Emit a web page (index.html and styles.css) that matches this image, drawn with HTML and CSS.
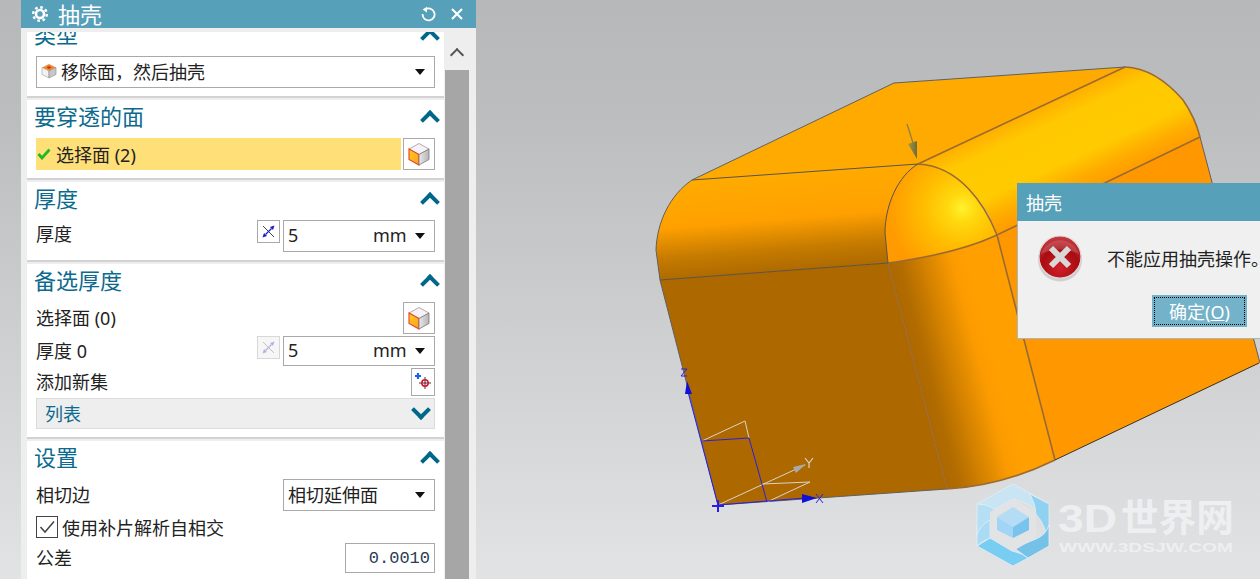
FILE: index.html
```html
<!DOCTYPE html>
<html lang="zh-CN">
<head>
<meta charset="utf-8">
<title>抽壳</title>
<link rel="stylesheet" href="styles.css">
</head>
<body>
<svg class="canvas" viewBox="0 0 1260 579" width="1260" height="579" xmlns="http://www.w3.org/2000/svg">
  <defs>
    <linearGradient id="gLeft" gradientUnits="userSpaceOnUse" x1="800" y1="172" x2="808" y2="272">
      <stop offset="0" stop-color="#ffab00"/><stop offset=".45" stop-color="#ffa000"/><stop offset=".75" stop-color="#c67b00"/><stop offset="1" stop-color="#ab6800"/>
    </linearGradient>
    <linearGradient id="gRight" gradientUnits="userSpaceOnUse" x1="1022" y1="115" x2="1063" y2="203">
      <stop offset="0" stop-color="#ffae00"/><stop offset=".2" stop-color="#ffc800"/><stop offset=".62" stop-color="#ffcb00"/><stop offset=".84" stop-color="#ffab00"/><stop offset="1" stop-color="#ff9b00"/>
    </linearGradient>
    <linearGradient id="gMid" gradientUnits="userSpaceOnUse" x1="925" y1="400" x2="1000" y2="380">
      <stop offset="0" stop-color="#ad6800"/><stop offset=".15" stop-color="#b26c00"/><stop offset=".8" stop-color="#fb9b00"/><stop offset="1" stop-color="#ff9f00"/>
    </linearGradient>
    <radialGradient id="gCap" gradientUnits="userSpaceOnUse" cx="962" cy="208" r="74">
      <stop offset="0" stop-color="#fff22e"/><stop offset=".2" stop-color="#ffd80e"/><stop offset=".5" stop-color="#ffbe00"/><stop offset="1" stop-color="#ff9a00"/>
    </radialGradient>
    <linearGradient id="gCone" x1="0" y1="0" x2="1" y2="0">
      <stop offset="0" stop-color="#a09a50"/><stop offset="1" stop-color="#6e6a38"/>
    </linearGradient>
    <linearGradient id="gCubeFace" x1="0" y1="0" x2="1" y2="1">
      <stop offset="0" stop-color="#ffd020"/><stop offset="1" stop-color="#ff9a20"/>
    </linearGradient>
    <linearGradient id="gCubeSide" x1="0" y1="0" x2="1" y2="0">
      <stop offset="0" stop-color="#e8e8e8"/><stop offset="1" stop-color="#b4b4b4"/>
    </linearGradient>
  </defs>

  <!-- solid body -->
  <polygon fill="#ffaa00" points="692,180 894,83 1125,67 918,164"/>
  <path fill="url(#gLeft)" d="M692,180 L918,164 C898,176 885,205 885,233 L888,263 L660,280 L656,250 C657,222 670,195 692,180 Z"/>
  <polygon fill="#ad6800" points="660,280 888,263 947,489 718,505"/>
  <path fill="url(#gMid)" d="M888,263 C925,258 965,250 997,235 L1055,460 C1020,477 985,487 947,489 Z"/>
  <polygon fill="#ff9800" points="997,235 1200,137 1260,363 1055,460"/>
  <path fill="url(#gRight)" d="M918,164 L1125,67 C1150,68 1170,85 1183,100 C1192,113 1197,125 1200,137 L997,235 C990,210 965,170 918,164 Z"/>
  <path fill="url(#gCap)" d="M918,164 C960,166 985,205 997,235 C965,250 925,258 888,263 L885,233 C885,205 898,176 918,164 Z"/>

  <!-- seams -->
  <g fill="none" stroke="#9a6a34" stroke-width="1.6">
    <path d="M918,164 L1125,67"/>
    <path d="M997,235 L1200,137"/>
    <path d="M888,263 C925,258 965,250 997,235"/>
    <path d="M918,164 C960,166 985,205 997,235"/>
    <path d="M888,263 L947,489" stroke-opacity=".7"/>
    <path d="M997,235 L1055,460"/>
    <path d="M1125,67 C1150,68 1170,85 1183,100 C1192,113 1197,125 1200,137"/>
    <path d="M947,489 C985,487 1020,477 1055,460"/>
  </g>
  <g fill="none" stroke="#5c5246" stroke-width="1">
    <path d="M692,180 L918,164"/>
    <path d="M660,280 L888,263"/>
    <path d="M918,164 C898,176 885,205 885,233 L888,263"/>
  </g>
  <g fill="none" stroke="#606060" stroke-width="1">
    <path d="M692,180 L894,83 L1125,67"/>
    <path d="M692,180 C670,195 657,222 656,250 L660,280 L718,505"/>
    <path d="M1200,137 L1260,363"/>
    <path d="M718,505 L947,489"/>
    <path d="M1055,460 L1259,363" stroke="#333"/>
  </g>

  <!-- direction arrow -->
  <line x1="907" y1="124" x2="914" y2="146" stroke="#8a8248" stroke-width="1.3"/>
  <polygon fill="url(#gCone)" points="908,144 917,141 917,159"/>

  <!-- triad -->
  <g fill="none" stroke="#d8d4cc" stroke-width="1">
    <path d="M702,441 L745,421 L749,438"/>
    <path d="M718,505 L805,465"/>
    <path d="M762,484 L810,482 L767,502"/>
  </g>
  <g fill="none" stroke="#2a1fe0" stroke-width="1">
    <path d="M718,505 L688,392"/>
    <path d="M702,441 L749,438 L767,502"/>
    <path d="M718,505 L805,498"/>
    <path d="M712,506 L724,506 M718,500 L718,512" stroke-width="2"/>
    <path d="M681,369 L687,369 L681,376 L687,376"/>
    <path d="M816,494 L823,503 M823,494 L816,503"/>
  </g>
  <polygon fill="#1010d8" points="687,381 692,394 685,394"/>
  <polygon fill="#1010d8" points="817,498 802,494 802,503"/>
  <polygon fill="#aaaaaa" points="806,464 793,467 796,473"/>
  <path d="M805,458 L809,463 L813,458 M809,463 L809,468" fill="none" stroke="#d4d2cc" stroke-width="1.2"/>

  <!-- watermark -->
  <g stroke="#e4eef4" stroke-width=".8">
    <path fill="#c9e4f3" d="M1013,484 L1049,504 L1037,513 Q1035,505 1013,499 L993,510 Q985,504 977,504 Z"/>
    <path fill="#8fd1f1" d="M1030,494 L1049,504 L1049,546 Q1046,525 1036,514 Q1036,505 1030,494 Z"/>
    <path fill="#76c1e8" d="M1049,525 L1049,546 L1028,558 L1014,548 L1036,539 Q1046,535 1049,525 Z"/>
    <path fill="#79cdf3" d="M1013,566 L977,546 L990,538 L1012,551 Q1022,553 1028,558 Z"/>
    <path fill="#a9dbf4" d="M977,546 L977,525 Q984,512 990,512 L990,538 Q982,541 977,546 Z"/>
    <path fill="#b6dff4" d="M977,504 Q992,504 1000,515 L990,520 Q980,525 977,535 Z"/>
  </g>
  <polygon fill="#e1e3e5" points="1013,499 1036,512 1036,538 1013,551 990,538 990,512"/>
  <polygon fill="#b4dcf4" points="1013,507 1029,517 1013,527 997,517"/>
  <polygon fill="#a2d5f5" points="997,517 1013,527 1013,538 997,530"/>
  <polygon fill="#78c4ec" points="1029,517 1029,530 1013,538 1013,527"/>
  <text class="wm-main" x="1058" y="532" textLength="59" lengthAdjust="spacingAndGlyphs">3D</text>
  <text class="wm-main" x="1121" y="531" textLength="113" lengthAdjust="spacingAndGlyphs">世界网</text>
  <text class="wm-url" x="1059" y="552" textLength="174" lengthAdjust="spacingAndGlyphs">WWW.3DSJW.COM</text>
</svg>

<aside class="panel">
  <header class="panel-title">
    <svg class="title-icon" viewBox="0 0 16 16" width="16" height="16">
      <circle cx="8" cy="8" r="6.8" fill="none" stroke="#fff" stroke-width="2.4" stroke-dasharray="2.7 2.64"/>
      <circle cx="8" cy="8" r="4" fill="none" stroke="#fff" stroke-width="2.6"/>
    </svg>
    <span class="panel-name">抽壳</span>
    <svg class="title-btn" viewBox="0 0 16 16" width="16" height="16">
      <path d="M5 3.6 A6 6 0 1 1 2.6 8" fill="none" stroke="#fff" stroke-width="1.8"/>
      <polygon points="7,0.8 7,6.4 2.6,3.6" fill="#fff"/>
    </svg>
    <svg class="title-btn close" viewBox="0 0 14 14" width="14" height="14">
      <path d="M2 2 L12 12 M12 2 L2 12" stroke="#fff" stroke-width="2.1"/>
    </svg>
  </header>
  <div class="panel-body">
    <div class="sections">
      <section class="section first">
        <div class="head"><span>类型</span><i class="chev"></i></div>
        <div class="field wide">
          <svg class="type-icon" viewBox="0 0 16 16" width="16" height="16">
            <polygon points="8,1 15,4.5 8,8 1,4.5" fill="#f08a3a"/>
            <polygon points="5.5,4.5 8,3 10.5,4.5 8,6" fill="#c23a10"/>
            <polygon points="1,4.5 8,8 8,15 1,11.5" fill="#f2f2f2" stroke="#999" stroke-width=".6"/>
            <polygon points="15,4.5 8,8 8,15 15,11.5" fill="#c8c8c8" stroke="#888" stroke-width=".6"/>
          </svg>
          <span class="grow">移除面，然后抽壳</span><i class="caret"></i>
        </div>
      </section>

      <section class="section">
        <div class="head"><span>要穿透的面</span><i class="chev"></i></div>
        <div class="row">
          <div class="selected">
            <svg class="tick" viewBox="0 0 14 12" width="14" height="12"><path d="M1.5 6 L5 10 L12.5 1.5" fill="none" stroke="#22b82a" stroke-width="2.8"/></svg>
            <span>选择面 (2)</span>
          </div>
          <button class="icon-btn"><svg viewBox="0 0 24 24" width="24" height="24"><use href="#cube"/></svg></button>
        </div>
      </section>

      <section class="section">
        <div class="head"><span>厚度</span><i class="chev"></i></div>
        <div class="row">
          <span class="label up">厚度</span>
          <button class="mini-btn"><svg viewBox="0 0 21 21" width="21" height="21"><use href="#measure"/></svg></button>
          <div class="field num"><span class="grow">5</span><span class="unit">mm</span><i class="caret"></i></div>
        </div>
      </section>

      <section class="section">
        <div class="head"><span>备选厚度</span><i class="chev"></i></div>
        <div class="stack">
          <div class="row">
            <span class="label">选择面 (0)</span>
            <button class="icon-btn"><svg viewBox="0 0 24 24" width="24" height="24">
              <g id="cube">
                <polygon points="12,1.5 22,7 12,12.5 2,7" fill="#f6f2f8" stroke="#9a9a9a" stroke-width=".8"/>
                <polygon points="2,7 12,12.5 12,23 2,17.5" fill="url(#gCubeFace)" stroke="#e8402a" stroke-width="1.1"/>
                <polygon points="22,7 12,12.5 12,23 22,17.5" fill="url(#gCubeSide)" stroke="#7a7a7a" stroke-width=".8"/>
              </g>
            </svg></button>
          </div>
          <div class="row short">
            <span class="label">厚度 0</span>
            <button class="mini-btn off"><svg viewBox="0 0 21 21" width="21" height="21">
              <g id="measure">
                <path d="M5 5 L16 16" stroke="#444" stroke-width="1" fill="none"/>
                <path d="M7.5 13.5 L13.5 7.5" stroke="#1c1cc0" stroke-width="1.2" fill="none"/>
                <polygon points="16.5,4.5 12,6 15,9" fill="#1c1cc0"/>
                <polygon points="4.5,16.5 9,15 6,12" fill="#1c1cc0"/>
              </g>
            </svg></button>
            <div class="field num"><span class="grow">5</span><span class="unit">mm</span><i class="caret"></i></div>
          </div>
          <div class="row tiny">
            <span class="label">添加新集</span>
            <button class="add-btn"><svg viewBox="0 0 22 26" width="22" height="26">
              <path d="M3 7 H9 M6 4 V10" stroke="#1560f0" stroke-width="2.2" fill="none"/>
              <path d="M7 14 H19 M13 8 V20" stroke="#222" stroke-width=".9" fill="none"/>
              <circle cx="13" cy="14" r="3.2" fill="none" stroke="#e0102a" stroke-width="1.5"/>
            </svg></button>
          </div>
          <div class="list-bar"><span>列表</span><i class="chev down"></i></div>
        </div>
      </section>

      <section class="section">
        <div class="head"><span>设置</span><i class="chev"></i></div>
        <div class="stack loose">
          <div class="row">
            <span class="label">相切边</span>
            <div class="field num"><span class="grow">相切延伸面</span><i class="caret"></i></div>
          </div>
          <label class="check-row">
            <span class="check"><svg viewBox="0 0 20 20" width="20" height="20"><path d="M3.5 10 L8 15 L17 4.5" fill="none" stroke="#444" stroke-width="1.5"/></svg></span>
            <span>使用补片解析自相交</span>
          </label>
          <div class="row short">
            <span class="label">公差</span>
            <div class="field tol">0.0010</div>
          </div>
        </div>
      </section>
    </div>
    <div class="scroll">
      <div class="scroll-up"><i class="chev small"></i></div>
      <div class="scroll-thumb"></div>
    </div>
  </div>
</aside>

<div class="dialog">
  <div class="dialog-title">抽壳</div>
  <div class="dialog-body">
    <div class="dialog-msg">
      <svg class="err" viewBox="0 0 48 50" width="48" height="50">
        <defs>
          <radialGradient id="gErr" cx=".5" cy=".75" r=".75">
            <stop offset="0" stop-color="#d02028"/><stop offset=".6" stop-color="#a80c12"/><stop offset="1" stop-color="#c84048"/>
          </radialGradient>
        </defs>
        <ellipse cx="24" cy="27" rx="22" ry="21.5" fill="#bbbbbb" opacity=".6"/>
        <circle cx="24" cy="24" r="21" fill="url(#gErr)" stroke="#e0d8d8" stroke-width="1.2"/>
        <path d="M5 21 A20 20 0 0 1 43 21 Q24 12 5 21 Z" fill="#fff" opacity=".16"/>
        <path d="M15 15 L33 33 M33 15 L15 33" stroke="#d8d8d8" stroke-width="6"/>
      </svg>
      <span>不能应用抽壳操作。</span>
    </div>
    <div class="dialog-actions">
      <button class="ok"><span>确定(<u>O</u>)</span></button>
    </div>
  </div>
</div>
</body>
</html>
```

FILE: styles.css
```css
* { box-sizing: border-box; }

html, body { height: 100%; }

body {
  margin: 0;
  height: 579px;
  overflow: hidden;
  position: relative;
  background: linear-gradient(#b7b8ba, #bcbdbf 20%, #e2e3e5);
  font-family: "Noto Sans", "Noto Sans CJK SC", sans-serif;
  font-size: 18px;
  color: #222;
}

.canvas { position: absolute; left: 0; top: 0; display: block; }

.wm-main { font-family: "Liberation Sans", "Noto Sans CJK SC", sans-serif; font-size: 38px; font-weight: 700; fill: #eeeff1; }
.wm-url { font-family: "Liberation Sans", sans-serif; font-size: 12px; font-weight: 700; fill: #eeeff1; }

/* Side panel */
.panel {
  position: relative;
  width: 455px;
  height: 579px;
  margin-left: 21px;
  background: #eeeeef;
  display: flex;
  flex-direction: column;
}

.panel-title {
  flex: 0 0 28px;
  background: #56a0ba;
  color: #fff;
  display: flex;
  align-items: center;
  padding: 0 12px 0 11px;
}
.title-icon { margin-right: 10px; }
.panel-name { font-size: 22px; line-height: 28px; flex: 1; }
.title-btn { margin-right: 14px; }
.title-btn.close { margin-right: 0; }

.panel-body { flex: 1; min-height: 0; display: flex; padding: 4px 7px 0 6px; }

.sections { width: 417px; overflow: hidden; }

.section {
  background: #fff;
  border-bottom: 2px solid #d2d2d2;
  margin-bottom: 2px;
  padding: 0 9px 8px;
}
.section.first { margin-top: -14px; }

.head {
  height: 38px;
  padding-bottom: 6px;
  margin-left: -2px;
  display: flex;
  align-items: center;
  justify-content: space-between;
  color: #0b6a8d;
  font-size: 22px;
  line-height: 30px;
}

.chev {
  display: block;
  width: 14px;
  height: 14px;
  margin-right: -2px;
  border-left: 4px solid #00678a;
  border-top: 4px solid #00678a;
  transform: translateY(4px) rotate(45deg);
}
.chev.down { transform: translateY(-3px) rotate(225deg); margin-right: 6px; }
.chev.small { width: 10px; height: 10px; margin: 0; border-width: 2.5px; border-color: #555; }

.row { display: flex; align-items: center; gap: 2px; min-height: 32px; }
.row.short { min-height: 30px; }
.row.tiny { min-height: 28px; }
.label { flex: 1; padding-bottom: 2px; }
.label.up { padding-bottom: 6px; }

.stack { display: flex; flex-direction: column; gap: 2px; }
.stack.loose { gap: 5px; }

.field {
  display: flex;
  align-items: center;
  height: 32px;
  background: #fff;
  border: 1px solid #a9a9a9;
  padding: 0 8px 2px 4px;
  white-space: nowrap;
}
.field.wide { width: 399px; }
.field.num { width: 152px; }
.row.short .field { height: 30px; }
.field.tol {
  width: 90px;
  justify-content: flex-end;
  padding: 0 4px 0 0;
  font-family: "Liberation Mono", monospace;
  font-size: 17px;
  color: #2a3a55;
}
.grow { flex: 1; }
.type-icon { margin-right: 4px; flex: none; }
.unit { width: 31px; margin-right: 11px; }

.caret {
  display: block;
  width: 0;
  height: 0;
  margin: 2px 1px 0 0;
  border-left: 5.5px solid transparent;
  border-right: 5.5px solid transparent;
  border-top: 6px solid #111;
}

.selected {
  flex: 1;
  height: 32px;
  background: #ffdf78;
  display: flex;
  align-items: center;
  gap: 5px;
  padding-left: 1px;
}

.icon-btn, .mini-btn, .add-btn {
  padding: 0;
  background: #fff;
  border: 1px solid #a9a9a9;
  display: flex;
  align-items: center;
  justify-content: center;
}
.icon-btn { width: 32px; height: 32px; }
.mini-btn { width: 23px; height: 23px; align-self: flex-start; margin-right: 1px; }
.mini-btn.off { border-color: #d8d8d8; background: #f6f6f6; }
.mini-btn.off svg { opacity: .3; }
.add-btn { width: 24px; height: 28px; }

.list-bar {
  height: 31px;
  background: #eeeeee;
  border: 1px solid #dcdcdc;
  display: flex;
  align-items: center;
  justify-content: space-between;
  padding: 0 0 2px 8px;
  color: #0b6a8d;
}

.check-row { display: flex; align-items: center; gap: 4px; height: 22px; }
.check {
  width: 22px;
  height: 22px;
  border: 1px solid #444;
  display: flex;
  align-items: center;
  justify-content: center;
}

/* Panel scrollbar */
.scroll { width: 24px; margin-left: 1px; display: flex; flex-direction: column; }
.scroll-up { flex: 0 0 38px; display: flex; align-items: center; justify-content: center; }
.scroll-thumb { flex: 1; background: #a6a6a6; }

/* Error dialog */
.dialog {
  position: absolute;
  left: 1017px;
  top: 183px;
  width: 243px;
  height: 156px;
  background: #f0f0f0;
  border-left: 1px solid #a4b8c4;
  border-bottom: 1px solid #a4b8c4;
  display: flex;
  flex-direction: column;
  white-space: nowrap;
}
.dialog-title {
  height: 38px;
  margin-left: -1px;
  padding-left: 9px;
  background: #56a0ba;
  color: #fff;
  line-height: 40px;
}
.dialog-body { flex: 1; display: flex; flex-direction: column; }
.dialog-msg { display: flex; align-items: center; height: 74px; padding-left: 18px; gap: 23px; }
.err { flex: none; }
.dialog-actions { display: flex; justify-content: flex-end; padding-right: 13px; }

.ok {
  width: 95px;
  height: 32px;
  padding: 2px;
  background: #73b2c9;
  border: 0;
  color: #fff;
  font: inherit;
  display: flex;
}
.ok span {
  flex: 1;
  border: 1px dotted #000;
  line-height: 28px;
  text-align: center;
}
```
